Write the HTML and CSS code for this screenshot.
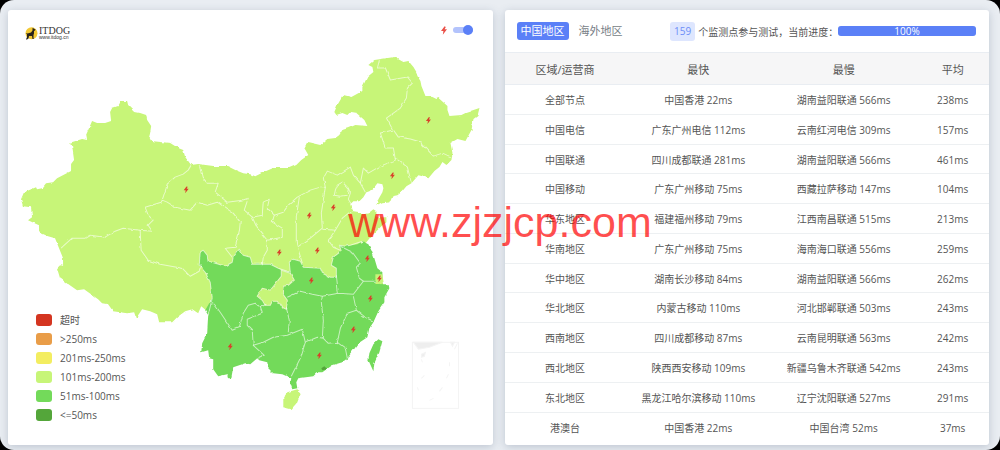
FILE: index.html
```
<!DOCTYPE html>
<html lang="zh-CN">
<head>
    <meta charset="UTF-8">
    <meta name="viewport" content="width=device-width, initial-scale=1.0">
    <title>ITDOG</title>
    <link rel="stylesheet" href="styles.css">
</head>
<body>
    <svg class="defs" width="0" height="0" aria-hidden="true">
        <symbol id="bolt" viewBox="0 0 10 14">
            <path d="M6 0 L0 8 H4 L3 14 L10 5 H6 L8 1 Z"/>
        </symbol>
    </svg>

    <main class="page">
        <section class="card map-card">
            <header class="map-header">
                <a class="logo" href="#">
                    <svg class="logo-icon" viewBox="0 0 26 26" aria-hidden="true">
                        <circle cx="13" cy="12.500" r="12" fill="#f3c934"/>
                        <path d="M15 3 L16 1 L17 3 L21 5 L20 7 L18 8 L18 13 L17 16 L17 23 L19 24 H15 L14 18 L8 18 L7 23 L4 25 H2 L4 20 L4 15 L2 12 L5 13 L12 11 L15 7 Z" fill="#29231a"/>
                    </svg>
                    <span class="logo-text">
                        <span class="logo-name">ITDOG</span>
                        <span class="logo-url">www.itdog.cn</span>
                    </span>
                </a>
                <label class="switch">
                    <svg class="switch-bolt" aria-label="闪电"><use href="#bolt"/></svg>
                    <input type="checkbox" checked>
                </label>
            </header>

            <svg class="map" viewBox="8 50 484 395" role="img" aria-label="中国地区">
                <defs>
                    <filter id="rough" x="0" y="0" width="100%" height="100%" color-interpolation-filters="sRGB">
                        <feTurbulence type="fractalNoise" baseFrequency="0.2" numOctaves="1" seed="4"/>
                        <feDisplacementMap in="SourceGraphic" scale="3" xChannelSelector="R" yChannelSelector="G"/>
                    </filter>
                </defs>

                <g filter="url(#rough)">
                    <!-- 101ms-200ms -->
                    <path class="level-200" d="M121 101 L127 101 L128 105 L135 112 L140 113 L146 115 L147 120 L151 126 L150 133 L149 137 L151 141 L170 143 L178 148 L183 150 L185 157 L191 165 L198 164 L213 166 L227 166 L235 170 L243 173 L250 174 L255 176 L263 172 L273 168 L289 168 L296 165 L301 160 L308 155 L304 148 L307 142 L320 145 L327 139 L335 138 L339 135 L342 130 L348 128 L355 125 L367 126 L364 120 L356 113 L350 112 L347 115 L342 113 L336 115 L334 112 L337 105 L343 95 L351 97 L362 91 L362 87 L367 77 L373 72 L372 67 L368 65 L374 60 L394 57 L403 62 L408 61 L413 67 L416 72 L417 76 L420 81 L421 86 L423 91 L425 96 L432 97 L436 99 L438 98 L447 106 L447 110 L449 116 L461 115 L467 112 L479 108 L477 116 L473 119 L471 130 L465 141 L457 139 L450 143 L452 153 L451 160 L446 165 L442 162 L439 167 L434 171 L428 178 L422 176 L418 175 L411 183 L406 186 L401 192 L397 195 L392 196 L390 201 L382 202 L376 205 L378 199 L382 192 L383 188 L382 184 L377 183 L374 187 L369 191 L366 192 L363 197 L359 201 L353 201 L350 204 L351 208 L353 211 L360 212 L363 214 L368 213 L373 209 L376 211 L376 217 L383 217 L387 217 L387 222 L383 224 L377 230 L370 237 L366 242 L345 280 L300 290 L230 290 L210 300 L210 305 L207 311 L201 306 L198 313 L192 309 L185 311 L177 317 L172 322 L159 322 L157 314 L150 311 L142 309 L136 318 L134 312 L127 313 L113 311 L108 304 L102 303 L98 299 L84 289 L77 290 L67 283 L60 278 L57 268 L60 265 L63 266 L63 258 L59 248 L55 238 L48 236 L39 232 L39 225 L28 220 L32 217 L31 207 L23 206 L21 199 L24 192 L36 187 L37 189 L42 188 L46 183 L53 182 L57 178 L71 171 L71 164 L74 160 L72 146 L69 143 L82 139 L87 140 L86 135 L92 121 L97 123 L105 123 L111 121 L110 112 L112 108 L118 106 Z"/>
                    <path class="level-200" d="M283 398 L287 392 L297 389 L301 392 L297 402 L291 409 L283 407 Z"/>

                    <!-- 51ms-100ms -->
                    <path class="level-100" d="M362 241 L368 244 L371 250 L374 258 L377 268 L382 272 L382 284 L388 284 L389 288 L384 297 L384 302 L378 311 L373 322 L369 328 L367 337 L358 343 L353 350 L347 358 L342 362 L332 365 L322 372 L317 372 L313 376 L298 378 L296 382 L297 388 L292 389 L290 383 L291 378 L282 374 L273 373 L268 368 L267 362 L259 360 L257 358 L250 364 L245 363 L233 367 L231 378 L228 378 L227 374 L218 376 L213 369 L213 359 L209 358 L208 350 L201 352 L202 343 L207 333 L208 315 L205 310 L209 303 L212 298 L210 282 L205 272 L199 265 L200 252 L203 250 L207 255 L208 261 L215 263 L225 266 L232 262 L233 257 L239 249 L243 255 L250 257 L252 264 L270 264 L278 268 L281 270 L290 272 L289 262 L293 259 L300 261 L303 267 L320 268 L322 273 L330 277 L336 277 L336 268 L331 265 L333 257 L341 251 L339 245 L345 246 L350 245 L357 244 Z"/>
                    <path class="level-100" d="M378 339 L382 341 L379 352 L374 363 L373 371 L368 360 L369 353 L373 344 Z"/>

                    <path class="level-200 outlined" d="M281 270 L290 273 L294 280 L288 285 L283 286 L282 293 L287 300 L286 309 L282 307 L278 301 L272 301 L270 305 L265 305 L262 300 L257 296 L262 288 L270 290 L274 285 L281 276 Z"/>
                    <path class="level-200" d="M375 274 L382 274 L383 281 L381 284 L375 283 Z"/>
                    <path class="level-50" d="M321 368 L324 366 L327 369 L322 370 Z"/>

                    <g class="borders">
                        <path d="M191 165 L188 170 L183 174 L175 177 L167 184 L166 188 L162 200 L161 202 L145 207 L148 215 L153 220 L148 225 L152 231 L140 230 L123 228 L115 231 L105 237 L90 235 L85 238 L72 238 L62 247"/>
                        <path d="M140 230 L141 250 L148 260 L160 264 L182 268 L190 276 L199 271 L201 264"/>
                        <path d="M162 200 L167 202 L175 207 L190 210 L197 202 L207 205 L217 202 L233 213 L240 222 L239 232 L235 247 L225 248 L232 257"/>
                        <path d="M199 165 L202 177 L207 183 L218 183 L215 192 L227 202 L242 200 L248 198 L244 210 L252 217"/>
                        <path d="M252 217 L262 215 L263 202 L269 199 L267 208 L274 215 L272 222 L282 228 L282 237 L267 240 L257 228 Z"/>
                        <path d="M274 215 L283 212 L288 205 L297 197 L310 190 L320 187 L325 187 L323 178 L327 171 L337 175 L350 167 L353 175 L360 183 L365 192"/>
                        <path d="M299 197 L296 217 L296 243 L302 263 M267 240 L267 250 L263 257 L262 265"/>
                        <path d="M325 187 L323 200 L321 213 L322 228 L310 238 L297 247"/>
                        <path d="M335 190 L337 185 L342 182 L348 188 L347 195 L340 196 L334 195 Z M348 188 L350 193 L348 199 L351 204"/>
                        <path d="M352 210 L342 218 L335 230 L322 229 M335 230 L328 240 L333 247 L340 250"/>
                        <path d="M360 183 L363 168 L368 173 L380 166 L395 160 L393 148 L385 148 L380 133 L393 130 L398 137 L410 139 L420 142 L433 156 L442 153 L451 157"/>
                        <path d="M395 158 L407 167 L411 183 M392 129 L386 118 L400 108 L406 98 L407 88 L412 83 L407 77 L390 80 L385 68 L377 68 L379 60"/>
                        <path d="M212 302 L215 305 L220 312 L232 330 L239 327 L243 313 L248 305 L255 303 L260 307 L262 313 L252 317 L247 319 L247 325 L252 330 L253 345 L264 355 L258 358"/>
                        <path d="M253 345 L263 342 L273 337 L287 335 L302 329 L305 342 L300 358 L291 376 M260 307 L266 304 M286 307 L289 320 L288 332"/>
                        <path d="M287 297 L300 291 L312 294 L322 296 L338 293 L353 294 L363 281 L375 281 M336 275 L338 293"/>
                        <path d="M322 296 L321 302 L323 320 L322 338 M305 342 L317 337 L323 338 L328 343 L337 342 L345 348 L347 358"/>
                        <path d="M337 342 L340 328 L347 313 L356 310 L365 317 L373 321 M356 310 L353 296"/>
                        <path d="M340 246 L352 252 L360 263 L356 267 L359 278 L363 281"/>
                        <path d="M208 315 L212 298 L210 282 L205 272 L199 265 L200 252 L203 250 L207 255 L208 261 L215 263 L225 266 L232 262 L233 257 L239 249 L243 255 L250 257 L252 264 L270 264 L278 268 L290 272 L289 262 L293 259 L300 261 L303 267 L320 268 L322 273 L330 277 L336 277 L336 268 L331 265 L333 257 L341 251 L339 245 L345 246 L350 245 L362 241"/>
                    </g>
                </g>

                <!-- islands inset -->
                <g class="inset">
                    <rect x="412" y="342" width="46" height="66"/>
                    <path class="inset-land" d="M413 342 H442 L429 347 L418 349 Z M421 354 L425 352 L424 356 L421 357 Z M450 342 H454 L452 346 Z"/>
                    <path d="M457 343 L454 349 M449 362 V366 M448 374 L446 378 M442 387 L439 391 M424 375 L421 378 M421 359 L422 362 M417 387 L418 390 M429 400 L433 398"/>
                </g>

                <g class="bolts">
                    <use href="#bolt" x="183" y="186" width="6" height="7"/>
                    <use href="#bolt" x="425" y="117" width="6" height="7"/>
                    <use href="#bolt" x="389" y="172" width="6" height="7"/>
                    <use href="#bolt" x="330" y="204" width="6" height="7"/>
                    <use href="#bolt" x="306" y="212" width="6" height="7"/>
                    <use href="#bolt" x="276" y="249" width="6" height="7"/>
                    <use href="#bolt" x="314" y="247" width="6" height="7"/>
                    <use href="#bolt" x="308" y="277" width="6" height="7"/>
                    <use href="#bolt" x="364" y="255" width="6" height="7"/>
                    <use href="#bolt" x="376" y="275" width="6" height="7"/>
                    <use href="#bolt" x="367" y="295" width="6" height="7"/>
                    <use href="#bolt" x="350" y="326" width="6" height="7"/>
                    <use href="#bolt" x="316" y="352" width="6" height="7"/>
                    <use href="#bolt" x="227" y="343" width="6" height="7"/>
                </g>
            </svg>

            <ul class="legend">
                <li><i class="swatch timeout"></i>超时</li>
                <li><i class="swatch over-250"></i>&gt;250ms</li>
                <li><i class="swatch to-250"></i>201ms-250ms</li>
                <li><i class="swatch to-200"></i>101ms-200ms</li>
                <li><i class="swatch to-100"></i>51ms-100ms</li>
                <li><i class="swatch to-50"></i>&lt;=50ms</li>
            </ul>
        </section>

        <section class="card result-card">
            <header class="result-header">
                <div class="tabs">
                    <button type="button" class="tab active">中国地区</button>
                    <button type="button" class="tab">海外地区</button>
                </div>
                <div class="status">
                    <span class="count">159</span>
                    <span>个监测点参与测试，当前进度：</span>
                </div>
                <div class="progress" role="progressbar" aria-valuenow="100" aria-valuemin="0" aria-valuemax="100">
                    <div class="progress-bar" style="width: 100%">100%</div>
                </div>
            </header>

            <table class="results">
                <thead>
                    <tr><th class="col-area">区域/运营商</th><th class="col-node">最快</th><th class="col-node">最慢</th><th class="col-avg">平均</th></tr>
                </thead>
                <tbody>
                    <tr><td>全部节点</td><td>中国香港 22ms</td><td>湖南益阳联通 566ms</td><td>238ms</td></tr>
                    <tr><td>中国电信</td><td>广东广州电信 112ms</td><td>云南红河电信 309ms</td><td>157ms</td></tr>
                    <tr><td>中国联通</td><td>四川成都联通 281ms</td><td>湖南益阳联通 566ms</td><td>461ms</td></tr>
                    <tr><td>中国移动</td><td>广东广州移动 75ms</td><td>西藏拉萨移动 147ms</td><td>104ms</td></tr>
                    <tr><td>华东地区</td><td>福建福州移动 79ms</td><td>江西南昌联通 515ms</td><td>213ms</td></tr>
                    <tr><td>华南地区</td><td>广东广州移动 75ms</td><td>海南海口联通 556ms</td><td>259ms</td></tr>
                    <tr><td>华中地区</td><td>湖南长沙移动 84ms</td><td>湖南益阳联通 566ms</td><td>262ms</td></tr>
                    <tr><td>华北地区</td><td>内蒙古移动 110ms</td><td>河北邯郸联通 503ms</td><td>243ms</td></tr>
                    <tr><td>西南地区</td><td>四川成都移动 87ms</td><td>云南昆明联通 563ms</td><td>242ms</td></tr>
                    <tr><td>西北地区</td><td>陕西西安移动 109ms</td><td>新疆乌鲁木齐联通 542ms</td><td>243ms</td></tr>
                    <tr><td>东北地区</td><td>黑龙江哈尔滨移动 110ms</td><td>辽宁沈阳联通 527ms</td><td>291ms</td></tr>
                    <tr><td>港澳台</td><td>中国香港 22ms</td><td>中国台湾 52ms</td><td>37ms</td></tr>
                </tbody>
            </table>
        </section>

        <div class="watermark">www.zjzjcp.com</div>
    </main>
</body>
</html>
```
FILE: styles.css
```
* {
    margin: 0;
    padding: 0;
    box-sizing: border-box;
}

body {
    background: #000;
    color: #555;
    font-family: "Open Sans", "Noto Sans CJK SC", sans-serif;
    font-size: 10px;
}

.defs {
    position: absolute;
}

.page {
    position: relative;
    display: grid;
    grid-template-columns: 1fr 1fr;
    gap: 12px;
    min-height: 100vh;
    padding: 10px 11px 5px 8px;
    background: #e9edf2;
    border-radius: 14px;
}

.card {
    display: flex;
    flex-direction: column;
    background: #fff;
    border-radius: 3px;
    box-shadow: 0 2px 8px rgba(60, 80, 110, 0.25);
}

/* Map */
.map-card {
    position: relative;
}

.map-header {
    display: flex;
    justify-content: space-between;
    align-items: center;
    height: 40px;
    padding: 0 20px 0 17px;
}

.logo {
    display: flex;
    align-items: center;
    gap: 1px;
    padding-top: 6px;
    color: #333;
    text-decoration: none;
}

.logo-icon {
    width: 13px;
    height: 13px;
}

.logo-text {
    display: flex;
    flex-direction: column;
    font-family: "Liberation Serif", serif;
}

.logo-name {
    font-size: 10px;
    line-height: 8px;
}

.logo-url {
    font-family: "Liberation Sans", sans-serif;
    font-size: 5px;
    line-height: 4px;
}

.switch {
    display: flex;
    align-items: center;
    gap: 6px;
    cursor: pointer;
}

.switch-bolt {
    width: 6px;
    height: 9px;
    fill: #ea4f47;
}

.switch input {
    position: relative;
    appearance: none;
    width: 20px;
    height: 6px;
    border-radius: 3px;
    background: #b3c3fc;
}

.switch input::after {
    content: "";
    position: absolute;
    top: -2px;
    left: 0;
    width: 10px;
    height: 10px;
    border-radius: 50%;
    background: #5b80f7;
}

.switch input:checked::after {
    left: auto;
    right: 0;
}

.map {
    display: block;
    width: 100%;
}

.level-200 { fill: #c7f578; }
.level-100 { fill: #73da5a; }
.level-50 { fill: #54a63a; }

.outlined {
    stroke: #e2f5c4;
}

.borders {
    fill: none;
    stroke: #fff;
    stroke-opacity: 0.6;
    stroke-linejoin: round;
}

.bolts {
    fill: #d8412b;
}

.inset {
    fill: none;
    stroke: #f4f4f4;
}

.inset-land {
    fill: #eee;
}

.legend {
    position: absolute;
    left: 28px;
    bottom: 21px;
    list-style: none;
}

.legend li {
    display: flex;
    align-items: center;
    gap: 8px;
    height: 19px;
}

.swatch {
    width: 16px;
    height: 12px;
    border-radius: 3px;
}

.timeout { background: #d43520; }
.over-250 { background: #e99d48; }
.to-250 { background: #f3ed60; }
.to-200 { background: #c7f578; }
.to-100 { background: #73da5a; }
.to-50 { background: #54a63a; }

/* Results */
.result-card {
    padding-bottom: 4px;
}

.result-header {
    display: flex;
    align-items: center;
    height: 42px;
    padding: 0 13px 0 12px;
}

.tabs {
    display: flex;
    gap: 6px;
}

.tab {
    height: 18px;
    padding: 0 4px;
    border: 0;
    border-radius: 3px;
    background: none;
    color: #777e86;
    font: inherit;
    font-size: 11px;
    line-height: 18px;
    cursor: pointer;
}

.tab.active {
    background: #5b80f7;
    color: #fff;
}

.status {
    display: flex;
    align-items: center;
    gap: 3px;
    margin-left: auto;
    white-space: nowrap;
}

.count {
    height: 19px;
    padding: 0 4px;
    border-radius: 3px;
    background: #dee6fe;
    color: #6d8ef8;
    line-height: 18px;
}

.progress {
    width: 30%;
    height: 10px;
    border-radius: 3px;
    background: #e9ecef;
}

.progress-bar {
    height: 100%;
    border-radius: 3px;
    background: #5b80f7;
    color: #fff;
    line-height: 10px;
    text-align: center;
}

.results {
    flex: 1;
    width: 100%;
    border-collapse: collapse;
    table-layout: fixed;
    text-align: center;
}

.results th {
    height: 32px;
    border-top: 1px solid #e9edf2;
    border-bottom: 1px solid #e9edf2;
    background: #f6f6f7;
    font-size: 11px;
    font-weight: 400;
}

.results td {
    padding-top: 7px;
    border-bottom: 1px solid #edf0f2;
    vertical-align: baseline;
    white-space: nowrap;
}

.results tr:last-child td {
    border-bottom: 0;
}

.col-area { width: 25%; }
.col-node { width: 30%; }
.col-avg { width: 15%; }

.watermark {
    position: absolute;
    top: 222px;
    left: 50%;
    transform: translate(-50%, -50%);
    color: rgba(255, 0, 0, 0.7);
    font-family: "Liberation Sans", sans-serif;
    font-size: 43px;
    line-height: 50px;
    pointer-events: none;
}
```
